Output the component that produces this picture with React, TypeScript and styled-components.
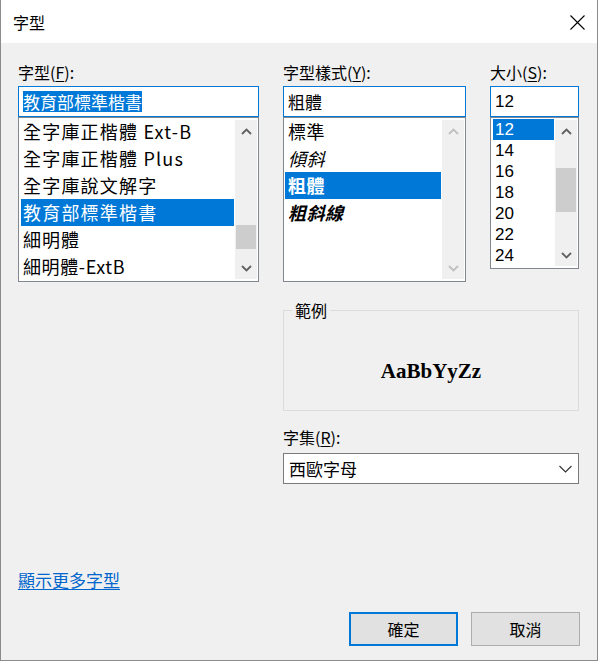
import React from "react";
import styled, { createGlobalStyle } from "styled-components";

const GlobalStyle = createGlobalStyle`
  html, body { margin: 0; padding: 0; background: #ffffff; }
  body { font-family: "Noto Sans CJK TC", "Noto Sans", sans-serif; color: #000; }
  * { box-sizing: border-box; }
`;

const Window = styled.div`
  width: 598px;
  height: 661px;
  border: 1px solid #8c8c8c;
  border-top: none;
  background: #f0f0f0;
  display: flex;
  flex-direction: column;
`;

const TitleBar = styled.div`
  height: 43px;
  flex: none;
  background: #ffffff;
  display: flex;
  align-items: center;
  justify-content: space-between;
  padding: 0 12px 0 12px;
`;

const Title = styled.div`
  font-size: 16px;
  line-height: 20px;
`;

const CloseIcon = styled.svg`
  width: 15px;
  height: 15px;
  display: block;
  margin-top: 1px;
`;

const Body = styled.div`
  flex: 1;
  display: flex;
  flex-direction: column;
  padding: 19px 19px 14px 17px;
`;

const ColumnsGrid = styled.div<{ $gapTop?: number }>`
  display: grid;
  grid-template-columns: 241px 183px 89px;
  column-gap: 24px;
  align-items: start;
  margin-top: ${(p) => p.$gapTop ?? 0}px;
`;

const Column = styled.div`
  display: flex;
  flex-direction: column;
`;

const Label = styled.div<{ $gapBelow?: number }>`
  font-size: 16px;
  line-height: 20px;
  height: 20px;
  margin-bottom: ${(p) => p.$gapBelow ?? 4}px;
  white-space: nowrap;
`;

const Accel = styled.span`
  text-decoration: underline;
  text-underline-offset: 2px;
`;

const TextBox = styled.div<{ $latin?: boolean }>`
  height: 31px;
  background: #ffffff;
  border: 1px solid #0078d7;
  display: flex;
  align-items: center;
  padding-left: 4px;
  font-size: 17px;
  line-height: 21px;
  white-space: nowrap;
  font-family: ${(p) =>
    p.$latin
      ? `"Liberation Sans", "Noto Sans CJK TC", sans-serif`
      : `"Noto Sans CJK TC", "Noto Sans", sans-serif`};
`;

const SelectedText = styled.span`
  background: #0078d7;
  color: #ffffff;
  line-height: 21px;
`;

const ListBox = styled.div<{ $height: number }>`
  height: ${(p) => p.$height}px;
  background: #ffffff;
  border: 1px solid #828790;
  display: grid;
  grid-template-columns: 1fr 22px;
  column-gap: 1px;
  padding-right: 1px;
  overflow: hidden;
`;

const Items = styled.div<{ $padLeft: number; $padTop: number }>`
  display: flex;
  flex-direction: column;
  padding-left: ${(p) => p.$padLeft}px;
  padding-top: ${(p) => p.$padTop}px;
  min-width: 0;
`;

const Item = styled.div<{
  $h: number;
  $size: number;
  $sel?: boolean;
  $italic?: boolean;
  $bold?: boolean;
  $spacing?: number;
  $indent: number;
  $latin?: boolean;
}>`
  height: ${(p) => p.$h}px;
  line-height: ${(p) => p.$h}px;
  font-size: ${(p) => p.$size}px;
  font-family: ${(p) =>
    p.$latin
      ? `"Liberation Sans", "Noto Sans CJK TC", sans-serif`
      : `"Noto Sans CJK TC", "Noto Sans", sans-serif`};
  padding-left: ${(p) => p.$indent}px;
  letter-spacing: ${(p) => p.$spacing ?? 0}px;
  font-style: ${(p) => (p.$italic ? "italic" : "normal")};
  font-weight: ${(p) => (p.$bold ? 700 : 400)};
  background: ${(p) => (p.$sel ? "#0078d7" : "transparent")};
  color: ${(p) => (p.$sel ? "#ffffff" : "#000000")};
  white-space: nowrap;
  overflow: hidden;
`;

const ScrollBar = styled.div`
  background: #f0f0f0;
  margin: 2px 0;
  display: flex;
  flex-direction: column;
`;

const ArrowBox = styled.div`
  height: 22px;
  flex: none;
  display: flex;
  align-items: center;
  justify-content: center;
`;

const Track = styled.div`
  flex: 1;
  display: flex;
  flex-direction: column;
`;

const Thumb = styled.div<{ $offset: number; $size: number }>`
  margin-top: ${(p) => p.$offset}px;
  height: ${(p) => p.$size}px;
  margin-left: 1px;
  margin-right: 1px;
  background: #cdcdcd;
`;

const RightStack = styled.div`
  grid-column: 2 / 4;
  display: flex;
  flex-direction: column;
`;

const SampleGroup = styled.fieldset`
  margin: 0;
  padding: 0;
  min-width: 0;
  height: 110px;
  border: 1px solid #dcdcdc;
`;

const SampleLegend = styled.legend`
  margin-left: 8px;
  padding: 0 3px;
  font-size: 16px;
  line-height: 18px;
`;

const SampleText = styled.div`
  margin-top: 37px;
  text-align: center;
  font-family: "Liberation Serif", "DejaVu Serif", serif;
  font-weight: 700;
  font-size: 21px;
  line-height: 30px;
`;

const CharsetLabel = styled(Label)`
  margin-top: 16px;
`;

const SelectBox = styled.div`
  height: 31px;
  background: #ffffff;
  border: 1px solid #7a7a7a;
  display: flex;
  align-items: center;
  justify-content: space-between;
  padding: 0 6px 0 5px;
  font-size: 17px;
`;

const Footer = styled.div`
  margin-top: auto;
  display: flex;
  flex-direction: column;
`;

const MoreLink = styled.a`
  align-self: flex-start;
  font-size: 17px;
  line-height: 20px;
  color: #0066cc;
  text-decoration: underline;
  text-underline-offset: 2px;
  cursor: pointer;
`;

const ButtonRow = styled.div`
  margin-top: 22px;
  margin-right: -2px;
  display: flex;
  justify-content: flex-end;
  gap: 13px;
`;

const Button = styled.button<{ $primary?: boolean }>`
  width: 109px;
  height: 34px;
  background: #e1e1e1;
  border: ${(p) => (p.$primary ? "2px solid #0078d7" : "1px solid #adadad")};
  font-family: "Noto Sans CJK TC", "Noto Sans", sans-serif;
  font-size: 16px;
  color: #000;
  padding: 0;
  display: flex;
  align-items: center;
  justify-content: center;
`;

const Chevron: React.FC<{ dir: "up" | "down"; color: string }> = ({ dir, color }) => (
  <svg width="11" height="7" viewBox="0 0 11 7">
    <path
      d={dir === "up" ? "M1 6 L5.5 1.5 L10 6" : "M1 1 L5.5 5.5 L10 1"}
      fill="none"
      stroke={color}
      strokeWidth="1.8"
    />
  </svg>
);

type Scroll = { enabled: boolean; offset?: number; size?: number };

const VScroll: React.FC<Scroll> = ({ enabled, offset = 0, size = 0 }) => {
  const c = enabled ? "#606060" : "#c0c0c0";
  return (
    <ScrollBar>
      <ArrowBox>
        <Chevron dir="up" color={c} />
      </ArrowBox>
      <Track>{enabled && <Thumb $offset={offset} $size={size} />}</Track>
      <ArrowBox>
        <Chevron dir="down" color={c} />
      </ArrowBox>
    </ScrollBar>
  );
};

const fonts = [
  { name: "全字庫正楷體 Ext-B", spacing: 1.2 },
  { name: "全字庫正楷體 Plus", spacing: 1.2 },
  { name: "全字庫說文解字", spacing: 1.2 },
  { name: "教育部標準楷書", spacing: 1.2, sel: true },
  { name: "細明體", spacing: 1 },
  { name: "細明體-ExtB", spacing: 0.6 },
];

const styles = [
  { name: "標準" },
  { name: "傾斜", italic: true },
  { name: "粗體", bold: true, sel: true },
  { name: "粗斜線", bold: true, italic: true },
];

const sizes = ["12", "14", "16", "18", "20", "22", "24"];

export default function App() {
  return (
    <>
      <GlobalStyle />
      <Window>
        <TitleBar>
          <Title>字型</Title>
          <CloseIcon viewBox="0 0 15 15">
            <path d="M0.5 0.5 L14.5 14.5 M14.5 0.5 L0.5 14.5" stroke="#000" strokeWidth="1.1" fill="none" />
          </CloseIcon>
        </TitleBar>
        <Body>
          <ColumnsGrid>
            <Column>
              <Label>
                字型(<Accel>F</Accel>):
              </Label>
              <TextBox>
                <SelectedText>教育部標準楷書</SelectedText>
              </TextBox>
              <ListBox $height={165}>
                <Items $padLeft={2} $padTop={0}>
                  {fonts.map((f) => (
                    <Item key={f.name} $h={27} $size={18} $indent={2} $spacing={f.spacing} $sel={f.sel}>
                      {f.name}
                    </Item>
                  ))}
                </Items>
                <VScroll enabled offset={83} size={24} />
              </ListBox>
            </Column>
            <Column>
              <Label>
                字型樣式(<Accel>Y</Accel>):
              </Label>
              <TextBox>粗體</TextBox>
              <ListBox $height={165}>
                <Items $padLeft={1} $padTop={0}>
                  {styles.map((s) => (
                    <Item
                      key={s.name}
                      $h={27}
                      $size={18}
                      $indent={3}
                      $spacing={0.5}
                      $italic={s.italic}
                      $bold={s.bold}
                      $sel={s.sel}
                    >
                      {s.name}
                    </Item>
                  ))}
                </Items>
                <VScroll enabled={false} />
              </ListBox>
            </Column>
            <Column>
              <Label>
                大小(<Accel>S</Accel>):
              </Label>
              <TextBox $latin>12</TextBox>
              <ListBox $height={152}>
                <Items $padLeft={2} $padTop={1}>
                  {sizes.map((s, i) => (
                    <Item key={s} $h={21} $size={17} $indent={2} $latin $sel={i === 0}>
                      {s}
                    </Item>
                  ))}
                </Items>
                <VScroll enabled offset={26} size={44} />
              </ListBox>
            </Column>
          </ColumnsGrid>
          <ColumnsGrid $gapTop={19}>
            <RightStack>
              <SampleGroup>
                <SampleLegend>範例</SampleLegend>
                <SampleText>AaBbYyZz</SampleText>
              </SampleGroup>
              <CharsetLabel $gapBelow={6}>
                字集(<Accel>R</Accel>):
              </CharsetLabel>
              <SelectBox>
                <span>西歐字母</span>
                <svg width="13" height="8" viewBox="0 0 13 8">
                  <path d="M0.5 1 L6.5 7 L12.5 1" fill="none" stroke="#333" strokeWidth="1.1" />
                </svg>
              </SelectBox>
            </RightStack>
          </ColumnsGrid>
          <Footer>
            <MoreLink>顯示更多字型</MoreLink>
            <ButtonRow>
              <Button $primary>確定</Button>
              <Button>取消</Button>
            </ButtonRow>
          </Footer>
        </Body>
      </Window>
    </>
  );
}
